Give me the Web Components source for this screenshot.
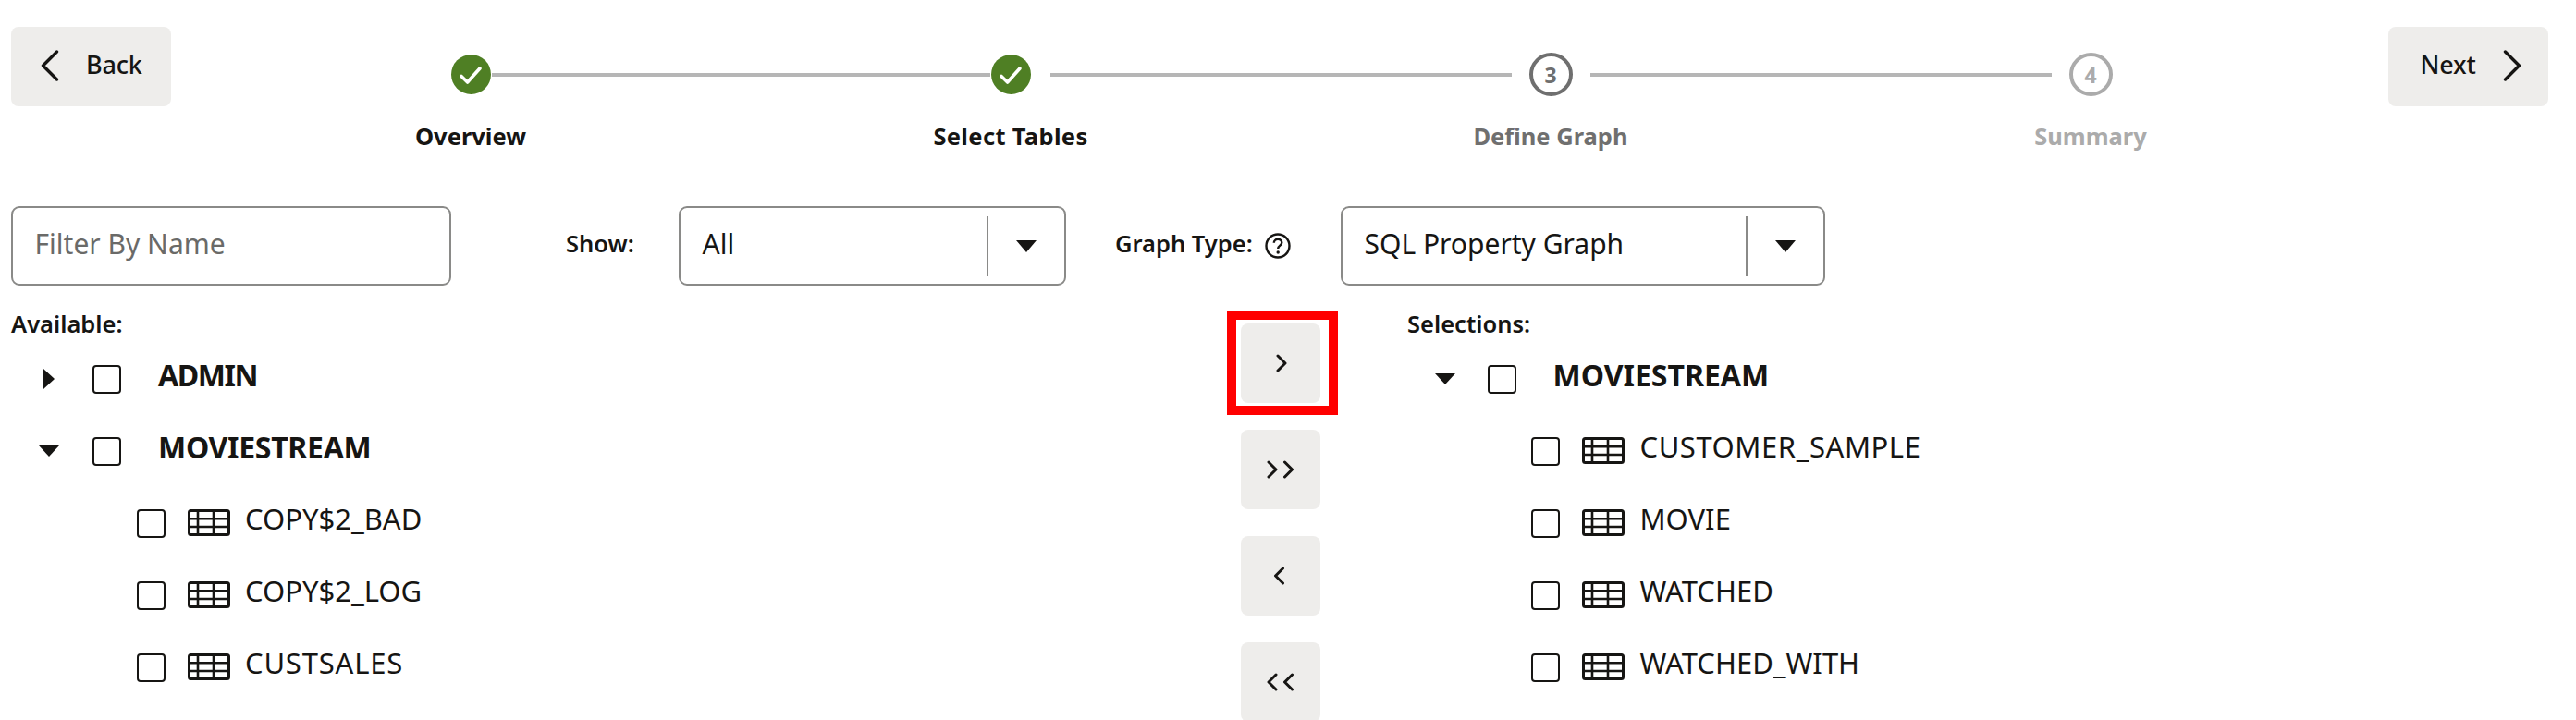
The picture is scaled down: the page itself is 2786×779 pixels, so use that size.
<!DOCTYPE html>
<html lang="en"><head><meta charset="utf-8"><title>Select Tables</title>
<style>
html,body{margin:0;padding:0;background:#fff;overflow:hidden}
body{width:2786px;height:779px;font-family:"Noto Sans","Open Sans",sans-serif;color:#161513}
</style></head><body>
<app-page>
  <wizard-header>
    <nav-button dir="back">Back</nav-button>
    <wizard-stepper>
      <wizard-step state="done" after="near">Overview</wizard-step>
      <wizard-step state="done" before="near" after="far" style="letter-spacing:.35px">Select Tables</wizard-step>
      <wizard-step state="current" num="3" before="far" after="far">Define Graph</wizard-step>
      <wizard-step state="todo" num="4" before="far">Summary</wizard-step>
    </wizard-stepper>
    <nav-button dir="next">Next</nav-button>
  </wizard-header>
  <filter-bar>
    <text-field style="width:476px">Filter By Name</text-field>
    <field-label style="margin-left:124px;width:74px">Show:</field-label>
    <select-box style="width:419px;margin-left:48px">All</select-box>
    <field-label style="margin-left:53px;width:192px" help>Graph Type:</field-label>
    <select-box style="width:524px;margin-left:52px">SQL Property Graph</select-box>
  </filter-bar>
  <shuttle-layout>
    <shuttle-list slot="left" heading="Available:">
      <tree-row caret="right" style="letter-spacing:-1.4px">ADMIN</tree-row>
      <tree-row caret="down" style="letter-spacing:-.3px">MOVIESTREAM</tree-row>
      <tree-row table>COPY$2_BAD</tree-row>
      <tree-row table>COPY$2_LOG</tree-row>
      <tree-row table style="letter-spacing:.8px">CUSTSALES</tree-row>
    </shuttle-list>
    <shuttle-actions slot="mid">
      <move-button kind="one" highlighted></move-button>
      <move-button kind="all"></move-button>
      <move-button kind="back"></move-button>
      <move-button kind="backall"></move-button>
    </shuttle-actions>
    <shuttle-list slot="right" heading="Selections:" style="--row-shift:-1.5px">
      <tree-row caret="down" style="letter-spacing:0">MOVIESTREAM</tree-row>
      <tree-row table style="letter-spacing:.55px">CUSTOMER_SAMPLE</tree-row>
      <tree-row table>MOVIE</tree-row>
      <tree-row table>WATCHED</tree-row>
      <tree-row table>WATCHED_WITH</tree-row>
    </shuttle-list>
  </shuttle-layout>
</app-page>
<script>
function def(name, css, html){
  customElements.define(name, class extends HTMLElement{
    constructor(){super();this.attachShadow({mode:'open'});}
    connectedCallback(){
      const h = typeof html==='function'?html(this):html;
      this.shadowRoot.innerHTML='<style>'+css+'</style>'+h;
    }
  });
}
const FONT='font-family:"Noto Sans","Open Sans",sans-serif;';
def('app-page',`:host{display:flex;flex-direction:column;width:2786px;height:779px;overflow:hidden;${FONT}color:#161513}`,'<slot></slot>');
def('wizard-header',`:host{display:flex;align-items:flex-start;padding:29px 30px 0 12px;height:223px;box-sizing:border-box;flex:none}`,'<slot></slot>');
def('nav-button',`:host{display:flex;align-items:center;width:173px;height:86px;background:#eeedeb;border-radius:8px;flex:none;font-size:27px;font-weight:500;box-sizing:border-box;letter-spacing:-.2px}
 :host([dir=back]){padding-left:32px}
 :host([dir=next]){padding-left:34.5px}
 span{position:relative;top:-3px}
 svg{width:20px;height:34px;flex:none}
 :host([dir=back]) svg{margin-right:29px}
 :host([dir=next]) svg{margin-left:29px}`,
 el=> el.getAttribute('dir')==='back'
 ? '<svg viewBox="0 0 20 34" style="position:relative;top:-1px"><path d="M17.5 2 L2.5 17 L17.5 32" fill="none" stroke="#161513" stroke-width="3.4" stroke-linecap="round" stroke-linejoin="round"/></svg><span><slot></slot></span>'
 : '<span><slot></slot></span><svg viewBox="0 0 20 34" style="position:relative;top:-1px"><path d="M2.5 2 L17.5 17 L2.5 32" fill="none" stroke="#161513" stroke-width="3.4" stroke-linecap="round" stroke-linejoin="round"/></svg>');
def('wizard-stepper',`:host{display:grid;grid-template-columns:repeat(4,584px);margin:28px 30px 0 32px;flex:none}`,'<slot></slot>');
def('wizard-step',`:host{display:grid;grid-template-columns:1fr 47px 1fr;align-items:center;justify-items:stretch;font-size:25.5px;font-weight:700;line-height:34px}
 .l{height:4px;background:#b6b6b6}
 .c{width:47px;height:47px;box-sizing:border-box;border-radius:50%;display:flex;align-items:center;justify-content:center;font-size:23px;font-weight:700;justify-self:center;letter-spacing:0}
 .lab{grid-column:1/4;text-align:center;margin-top:25.5px}
 :host([state=current]) .c{border:4px solid #6f6f6f;color:#6f6f6f}
 :host([state=current]) .lab{color:#6f6f6f}
 :host([state=todo]) .c{border:4px solid #ababab;color:#ababab}
 :host([state=todo]) .lab{color:#ababab}
 .r.near{margin-left:-1px}.le.near{margin-right:-1px}
 .r.far{margin-left:19px}.le.far{margin-right:19px}
 svg{display:block;width:43px;height:43px}`,
 el=>{
  const b=el.getAttribute('before'),a=el.getAttribute('after');
  const st=el.getAttribute('state');
  const inner= st==='done'
   ? '<svg viewBox="0 0 43 43"><circle cx="21.5" cy="21.5" r="21.5" fill="#4f7f24"/><path d="M11 23.5 L17.6 30 L31 15" fill="none" stroke="#fff" stroke-width="3.6" stroke-linecap="round" stroke-linejoin="round"/></svg>'
   : el.getAttribute('num');
  return `${b?`<div class="l le ${b}"></div>`:'<div></div>'}<div class="c">${inner}</div>${a?`<div class="l r ${a}"></div>`:'<div></div>'}<div class="lab"><slot></slot></div>`;
 });
def('filter-bar',`:host{display:flex;align-items:center;padding-left:12px;height:86px;flex:none}`,'<slot></slot>');
const boxCss=`:host{display:flex;align-items:center;height:86px;box-sizing:border-box;border:2.5px solid #8a8a88;border-radius:9px;font-size:30px;flex:none;padding-left:23.5px;position:relative}
 span{position:relative;top:-3px}`;
def('text-field',boxCss+`:host{color:#6a6a68}`,'<span><slot></slot></span>');
def('select-box',boxCss+`.v{margin-left:auto;width:2px;height:65px;background:#8a8a88}
 .a{width:82.5px;display:flex;justify-content:center}
 svg{width:22px;height:13px;display:block}`,
 '<span><slot></slot></span><div class="v"></div><div class="a"><svg viewBox="0 0 22 13"><path d="M0 0H22L11 13Z" fill="#161513"/></svg></div>');
def('field-label',`:host{display:flex;align-items:center;font-size:25.5px;font-weight:600;flex:none;white-space:nowrap}
 span{position:relative;top:-3px}
 svg{width:30px;height:30px;margin-left:12px;display:block}`,
 el=>'<span><slot></slot></span>'+(el.hasAttribute('help')?'<svg viewBox="0 0 30 30"><circle cx="15" cy="15" r="12.5" fill="none" stroke="#161513" stroke-width="2.4"/><path d="M10.8 11.8 C10.8 9.2 13 7.8 15 7.8 C17.4 7.8 19.3 9.4 19.3 11.6 C19.3 14.6 15.2 14.8 15.2 18" fill="none" stroke="#161513" stroke-width="2.4"/><circle cx="15.2" cy="22" r="1.7" fill="#161513"/></svg>':''));
def('shuttle-layout',`:host{display:grid;grid-template-columns:1314px 120px 1fr;column-gap:0;padding-left:12px;margin-top:27px}
 .r{padding-left:76px}`,
 '<slot name="left"></slot><slot name="mid"></slot><div class="r"><slot name="right"></slot></div>');
def('shuttle-list',`:host{display:block}
 h2{margin:0 0 7px;font-size:25.5px;font-weight:600;line-height:28px}`,
 el=>`<h2>${el.getAttribute('heading')}</h2><slot></slot>`);
def('tree-row',`:host{display:flex;align-items:center;height:78px;font-size:31px;flex:none}
 .cw{width:82px;display:flex;justify-content:center;margin-right:calc(6px + var(--row-shift,0px));flex:none}
 .cb{width:31px;height:31px;box-sizing:border-box;border:2.8px solid #161513;border-radius:4px;flex:none;background:#fff}
 .t{position:relative;top:-5px}
 :host([caret]) .t{font-weight:700;margin-left:40px;font-size:32px}
 :host([table]) .cb{margin-left:calc(135.5px + var(--row-shift,0px))}
 svg.tb{width:46px;height:29px;margin:0 16.5px 0 24px;flex:none;position:relative;top:-1px}
 svg.cr{display:block}`,
 el=>{
  const c=el.getAttribute('caret');
  const tb='<svg class="tb" viewBox="0 0 46 29"><rect x="1.5" y="1.5" width="43" height="26" rx="2" fill="none" stroke="#161513" stroke-width="3"/><path d="M1 10.2H45M1 19H45M11 1V28M28 1V28" stroke="#161513" stroke-width="2.6" fill="none"/></svg>';
  const cr= c==='right'?'<svg class="cr" width="12" height="22" viewBox="0 0 12 22"><path d="M0 0L12 11L0 22Z" fill="#161513"/></svg>'
   :'<svg class="cr" width="22" height="12" viewBox="0 0 22 12"><path d="M0 0H22L11 12Z" fill="#161513"/></svg>';
  return (c?`<div class="cw">${cr}</div>`:'')+'<div class="cb"></div>'+(el.hasAttribute('table')?tb:'')+'<span class="t"><slot></slot></span>';
 });
def('shuttle-actions',`:host{display:flex;flex-direction:column;gap:29px;padding:14px 0 0 16px;position:relative}`,'<slot></slot>');
def('move-button',`:host{display:flex;align-items:center;justify-content:center;width:86px;height:86px;background:#eeedeb;border-radius:8px;position:relative;flex:none}
 .hl{position:absolute;left:-15.5px;top:-14px;width:120px;height:113px;box-sizing:border-box;border:10px solid #ff0000}
 svg{width:32px;height:20px;display:block}`,
 el=>{
  const k=el.getAttribute('kind');
  const p={one:'M13 2 L21 10 L13 18',all:'M3 2 L11 10 L3 18 M20.5 2 L28.5 10 L20.5 18',back:'M18.5 2 L10.5 10 L18.5 18',backall:'M11 2 L3 10 L11 18 M28.5 2 L20.5 10 L28.5 18'}[k];
  return (el.hasAttribute('highlighted')?'<div class="hl"></div>':'')+`<svg viewBox="0 0 32 20"><path d="${p}" fill="none" stroke="#161513" stroke-width="3" stroke-linecap="round" stroke-linejoin="round"/></svg>`;
 });
</script>
</body></html>
